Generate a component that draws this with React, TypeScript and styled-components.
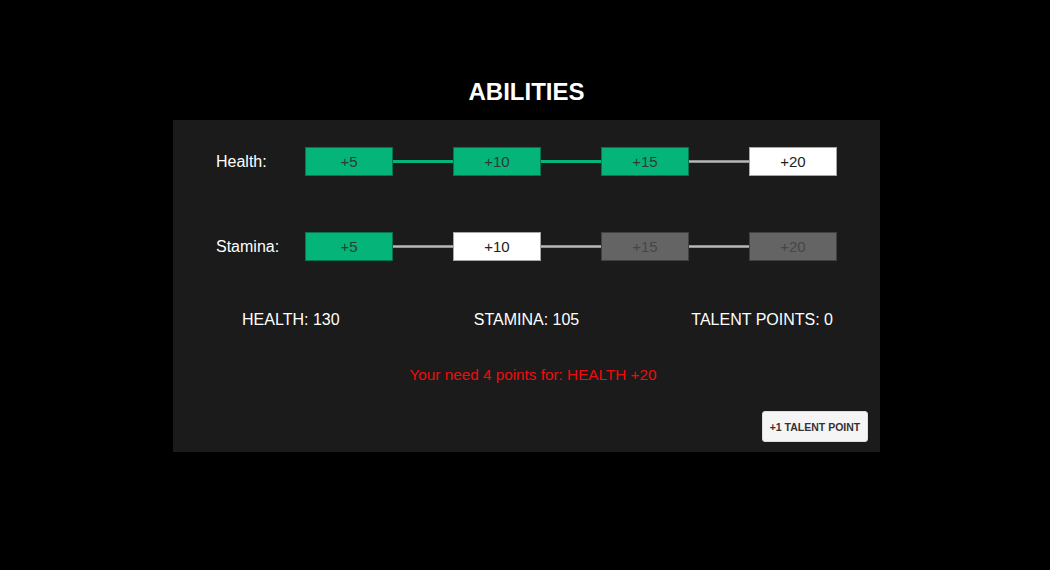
import { ReactElement } from 'react';
import styled, { createGlobalStyle } from 'styled-components';

type Tier = 'done' | 'next' | 'locked';

const abilities: { label: string; tiers: { value: number; state: Tier }[] }[] = [
    {
        label: 'Health:',
        tiers: [
            { value: 5, state: 'done' },
            { value: 10, state: 'done' },
            { value: 15, state: 'done' },
            { value: 20, state: 'next' },
        ],
    },
    {
        label: 'Stamina:',
        tiers: [
            { value: 5, state: 'done' },
            { value: 10, state: 'next' },
            { value: 15, state: 'locked' },
            { value: 20, state: 'locked' },
        ],
    },
];

const App = (): ReactElement => (
    <>
        <GlobalStyle />
        <Page>
            <Title>ABILITIES</Title>
            <Panel>
                {abilities.map((ability) => (
                    <Row key={ability.label}>
                        <Label>{ability.label}</Label>
                        <Track>
                            {ability.tiers.map((tier, i) => (
                                <TierGroup key={tier.value}>
                                    {i > 0 && <Connector $active={tier.state === 'done'} />}
                                    <TierBox $state={tier.state}>+{tier.value}</TierBox>
                                </TierGroup>
                            ))}
                        </Track>
                    </Row>
                ))}
                <Stats>
                    <Stat>HEALTH: 130</Stat>
                    <Stat>STAMINA: 105</Stat>
                    <Stat>TALENT POINTS: 0</Stat>
                </Stats>
                <Warning>Your need 4 points for: HEALTH +20</Warning>
                <Footer>
                    <TalentButton>+1 TALENT POINT</TalentButton>
                </Footer>
            </Panel>
        </Page>
    </>
);

const GlobalStyle = createGlobalStyle`
    html, body {
        margin: 0;
        background: #000;
        font-family: "Liberation Sans", Arial, sans-serif;
    }
`;

const Page = styled.div`
    display: flex;
    flex-direction: column;
    align-items: center;
    padding: 77px 0 0 3px;
    height: 570px;
    box-sizing: border-box;
`;

const Title = styled.h1`
    margin: 0 0 13px;
    height: 30px;
    line-height: 30px;
    font-size: 24px;
    font-weight: 700;
    color: #fff;
`;

const Panel = styled.div`
    display: flex;
    flex-direction: column;
    width: 707px;
    height: 332px;
    box-sizing: border-box;
    padding-top: 27px;
    background: #1b1b1b;
`;

const Row = styled.div`
    display: flex;
    align-items: center;
    height: 29px;
    padding: 0 43px;
    margin-bottom: 56px;
    &:nth-of-type(2) {
        margin-bottom: 50px;
    }
`;

const Label = styled.div`
    width: 89px;
    font-size: 16px;
    color: #fff;
`;

const Track = styled.div`
    display: flex;
    align-items: center;
`;

const TierGroup = styled.div`
    display: flex;
    align-items: center;
`;

const Connector = styled.div<{ $active: boolean }>`
    width: 60px;
    height: 3px;
    background: ${(p) =>
        p.$active ? '#06b57a' : 'linear-gradient(#7d7d7d, #b8b8b8 50%, #7d7d7d)'};
`;

const tierColors: Record<Tier, { bg: string; fg: string }> = {
    done: { bg: '#04b479', fg: '#2c3b33' },
    next: { bg: '#ffffff', fg: '#222' },
    locked: { bg: '#646464', fg: '#464646' },
};

const TierBox = styled.div<{ $state: Tier }>`
    display: flex;
    align-items: center;
    justify-content: center;
    width: 88px;
    height: 29px;
    box-sizing: border-box;
    border: 1px solid rgba(0, 0, 0, 0.35);
    font-size: 15px;
    background: ${(p) => tierColors[p.$state].bg};
    color: ${(p) => tierColors[p.$state].fg};
`;

const Stats = styled.div`
    display: grid;
    grid-template-columns: repeat(3, 1fr);
    height: 18px;
    line-height: 18px;
    font-size: 16px;
    color: #fff;
`;

const Stat = styled.div`
    text-align: center;
`;

const Warning = styled.div`
    margin-top: 37px;
    text-align: center;
    padding-left: 13px;
    font-size: 15.3px;
    line-height: 18px;
    color: #ee0d0d;
`;

const Footer = styled.div`
    display: flex;
    justify-content: flex-end;
    margin-top: auto;
    padding: 0 12px 10px 0;
`;

const TalentButton = styled.button`
    width: 106px;
    height: 31px;
    padding: 0;
    border: 1px solid #ddd;
    border-radius: 3px;
    background: #f5f5f5;
    font-family: "Liberation Sans", Arial, sans-serif;
    font-size: 10.5px;
    font-weight: 700;
    color: #333;
    cursor: pointer;
`;

export default App;
